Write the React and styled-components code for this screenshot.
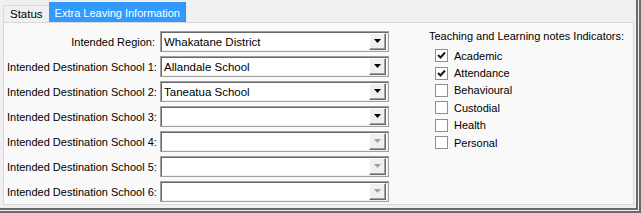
import React, { useState } from 'react'
import styled, { createGlobalStyle } from 'styled-components'

const GlobalStyle = createGlobalStyle`
  html, body {
    margin: 0;
    padding: 0;
    background: #f0f0f0;
  }
  body {
    font-family: Tahoma, "Liberation Sans", Arial, sans-serif;
    font-size: 11px;
    color: #000;
  }
`

const schools = [
  { label: 'Intended Region:', value: 'Whakatane District', enabled: true },
  { label: 'Intended Destination School 1:', value: 'Allandale School', enabled: true },
  { label: 'Intended Destination School 2:', value: 'Taneatua School', enabled: true },
  { label: 'Intended Destination School 3:', value: '', enabled: true },
  { label: 'Intended Destination School 4:', value: '', enabled: false },
  { label: 'Intended Destination School 5:', value: '', enabled: false },
  { label: 'Intended Destination School 6:', value: '', enabled: false },
]

const indicators = [
  { name: 'Academic', checked: true },
  { name: 'Attendance', checked: true },
  { name: 'Behavioural', checked: false },
  { name: 'Custodial', checked: false },
  { name: 'Health', checked: false },
  { name: 'Personal', checked: false },
]

const Arrow = ({ disabled }) => (
  <svg width="7" height="4" viewBox="0 0 7 4">
    <path d="M0 0H7L3.5 4Z" fill={disabled ? '#a0a0a0' : '#000'} />
  </svg>
)

const Tick = () => (
  <svg width="9" height="9" viewBox="0 0 9 9">
    <path d="M1 4L3.5 6.5L8 1.5" fill="none" stroke="#1a1a1a" strokeWidth="2" />
  </svg>
)

const App = () => {
  const [checks, setChecks] = useState(indicators)

  const toggle = (i) => {
    setChecks((prev) => prev.map((c, n) => (n === i ? { ...c, checked: !c.checked } : c)))
  }

  return (
    <Window>
      <GlobalStyle />
      <TabStrip>
        <Tab>Status</Tab>
        <Tab active>Extra Leaving Information</Tab>
      </TabStrip>
      <Panel>
        <FormGrid>
          {schools.map((s) => (
            <React.Fragment key={s.label}>
              <Label>{s.label}</Label>
              <Combo>
                <ComboText>{s.value}</ComboText>
                <DropButton>
                  <Arrow disabled={!s.enabled} />
                </DropButton>
              </Combo>
            </React.Fragment>
          ))}
        </FormGrid>
        <Indicators>
          <Heading>Teaching and Learning notes Indicators:</Heading>
          {checks.map((c, i) => (
            <CheckRow key={c.name} onClick={() => toggle(i)}>
              <Box>{c.checked && <Tick />}</Box>
              {c.name}
            </CheckRow>
          ))}
        </Indicators>
      </Panel>
    </Window>
  )
}

export default App

const Window = styled.div`
  width: 641px;
  height: 213px;
  box-sizing: border-box;
  padding-left: 3px;
  border-right: 5px double #6b6b6b;
  border-bottom: 5px double #6b6b6b;
  overflow: hidden;
`

const TabStrip = styled.div`
  display: flex;
  align-items: flex-end;
  height: 22px;
`

const Tab = styled.div`
  box-sizing: border-box;
  height: ${(p) => (p.active ? '20px' : '17px')};
  padding: 0 ${(p) => (p.active ? '5px' : '6px')};
  display: flex;
  align-items: center;
  background: ${(p) => (p.active ? '#3399ff' : '#f0f0f0')};
  color: ${(p) => (p.active ? '#fff' : '#000')};
  border: 1px solid ${(p) => (p.active ? '#3399ff' : '#d9d9d9')};
  border-bottom: none;
  border-right: ${(p) => (p.active ? '1px solid #7a7a7a' : 'none')};
  font-size: ${(p) => (p.active ? '11px' : '11.5px')};
`

const Panel = styled.div`
  box-sizing: border-box;
  width: 631px;
  height: 183px;
  background: #f9f9f9;
  border: 1px solid #d9d9d9;
  display: flex;
  padding: 8px 0 0 3px;
`

const FormGrid = styled.div`
  display: grid;
  grid-template-columns: 148px 229px;
  grid-auto-rows: 21px;
  column-gap: 5px;
  row-gap: 4px;
  align-items: center;
`

const Label = styled.div`
  text-align: right;
  white-space: nowrap;
`

const Combo = styled.div`
  box-sizing: border-box;
  height: 21px;
  background: #fff;
  border: 1px solid #a0a0a0;
  box-shadow: inset 1px 1px 0 #696969, inset -1px -1px 0 #f0f0f0;
  display: flex;
  align-items: center;
  padding: 2px 2px 2px 3px;
`

const ComboText = styled.div`
  flex: 1;
  font-size: 11.5px;
`

const DropButton = styled.div`
  box-sizing: border-box;
  width: 17px;
  height: 17px;
  background: #f0f0f0;
  border-top: 1px solid #fff;
  border-left: 1px solid #fff;
  border-right: 1px solid #696969;
  border-bottom: 1px solid #696969;
  box-shadow: inset -1px -1px 0 #a0a0a0;
  display: flex;
  align-items: center;
  justify-content: center;
  padding-bottom: 1px;
`

const Indicators = styled.div`
  margin-left: 40px;
  margin-top: -4px;
  display: flex;
  flex-direction: column;
`

const Heading = styled.div`
  height: 18px;
  margin-bottom: 2px;
  display: flex;
  align-items: center;
`

const CheckRow = styled.div`
  display: flex;
  align-items: center;
  gap: 6px;
  height: 17.4px;
  padding-left: 6px;
  cursor: default;
`

const Box = styled.div`
  box-sizing: border-box;
  width: 13px;
  height: 13px;
  background: #fff;
  border: 1px solid #8e8f8f;
  display: flex;
  align-items: center;
  justify-content: center;
`
